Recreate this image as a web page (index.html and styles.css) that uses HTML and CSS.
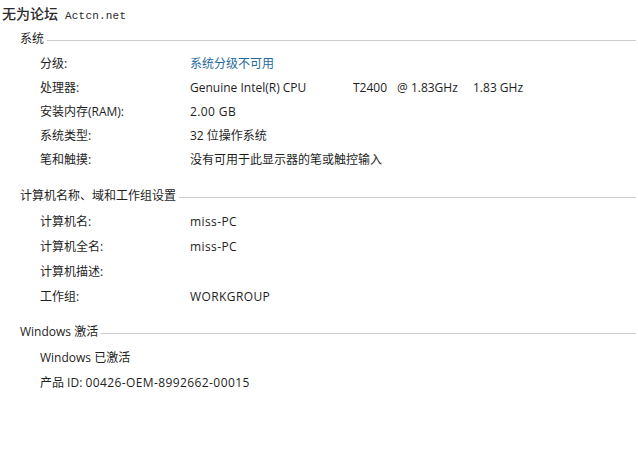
FILE: index.html
```html
<!DOCTYPE html>
<html lang="zh-CN">
<head>
    <meta charset="UTF-8">
    <title>系统</title>
    <link rel="stylesheet" href="styles.css">
</head>
<body>
    <div class="watermark"><span class="wm-cn">无为论坛</span><span class="wm-en">Actcn.net</span></div>

    <div class="section">
        <div class="section-title"><span>系统</span><div class="rule"></div></div>
        <div class="row"><span class="label">分级:</span><span class="value link">系统分级不可用</span></div>
        <div class="row"><span class="label">处理器:</span><span class="value"><span class="cpu-name">Genuine Intel(R) CPU</span><span class="cpu-model">T2400</span><span class="cpu-freq">@ 1.83GHz</span><span>1.83 GHz</span></span></div>
        <div class="row"><span class="label">安装内存(RAM):</span><span class="value en">2.00 GB</span></div>
        <div class="row"><span class="label">系统类型:</span><span class="value">32 位操作系统</span></div>
        <div class="row"><span class="label">笔和触摸:</span><span class="value">没有可用于此显示器的笔或触控输入</span></div>
    </div>

    <div class="section section-wide">
        <div class="section-title"><span>计算机名称、域和工作组设置</span><div class="rule"></div></div>
        <div class="row"><span class="label">计算机名:</span><span class="value en">miss-PC</span></div>
        <div class="row"><span class="label">计算机全名:</span><span class="value en">miss-PC</span></div>
        <div class="row"><span class="label">计算机描述:</span><span class="value"></span></div>
        <div class="row"><span class="label">工作组:</span><span class="value en">WORKGROUP</span></div>
    </div>

    <div class="section section-wide">
        <div class="section-title"><span>Windows 激活</span><div class="rule"></div></div>
        <div class="row"><span class="plain">Windows 已激活</span></div>
        <div class="row"><span class="plain">产品 ID: <span class="en">00426-OEM-8992662-00015</span></span></div>
    </div>
</body>
</html>
```

FILE: styles.css
```css
body {
    margin: 0;
    background: #fff;
    color: #1e1e1e;
    font-family: "Open Sans", "Noto Sans CJK SC", sans-serif;
    font-size: 12px;
}

/* Watermark */
.watermark {
    height: 27px;
    line-height: 27px;
    padding-left: 2px;
    color: #2a2a2a;
}

.wm-cn {
    font-family: "Noto Sans CJK SC", sans-serif;
    font-size: 14px;
    font-weight: 500;
}

.wm-en {
    margin-left: 7px;
    font-family: "Liberation Mono", monospace;
    font-size: 11px;
    letter-spacing: 0.2px;
}

/* Sections */
.section {
    padding-right: 2px;
}

.section-wide {
    margin-top: 12px;
}

.section-wide + .section-wide {
    margin-top: 11px;
}

.section-title {
    display: flex;
    align-items: center;
    height: 22px;
    padding-left: 20px;
    margin-bottom: 3px;
}

.rule {
    flex: 1;
    height: 1px;
    margin: 4px 0 0 3px;
    background: #cdcdcd;
}

.row {
    display: flex;
    height: 24px;
    line-height: 24px;
    padding-left: 40px;
}

.section-wide .row {
    height: 25px;
    line-height: 25px;
}

.label {
    width: 150px;
}

.link {
    color: #1f6a9c;
}

/* latin-only values run a little wider in the original */
.en {
    letter-spacing: 0.4px;
}

.cpu-name {
    display: inline-block;
    width: 163px;
}

.cpu-model {
    display: inline-block;
    width: 44px;
}

.cpu-freq {
    display: inline-block;
    width: 76px;
}
```
